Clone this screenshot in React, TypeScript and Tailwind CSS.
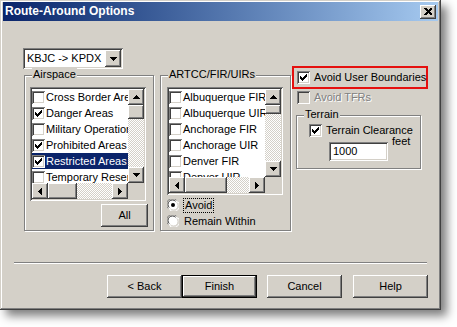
import React from "react"

const raised =
  "shadow-[inset_-1px_-1px_#404040,inset_1px_1px_#ffffff,inset_-2px_-2px_#808080,inset_2px_2px_#d4d0c8]"
const sunken =
  "shadow-[inset_1px_1px_#808080,inset_-1px_-1px_#ffffff,inset_2px_2px_#404040,inset_-2px_-2px_#d4d0c8]"
const etched = "border border-[#808080] shadow-[1px_1px_0_#ffffff,inset_1px_1px_0_#ffffff]"
const dither =
  "bg-[image:repeating-conic-gradient(#ffffff_0_25%,#d4d0c8_0_50%)] bg-[size:2px_2px]"

type Dir = "up" | "down" | "left" | "right"

function Arrow({ dir }: { dir: Dir }) {
  const rows = [0, 1, 2, 3]
  if (dir === "up" || dir === "down") {
    return (
      <svg width="7" height="4" shapeRendering="crispEdges">
        {rows.map((i) => (
          <rect key={i} x={3 - i} y={dir === "up" ? i : 3 - i} width={2 * i + 1} height={1} fill="#000" />
        ))}
      </svg>
    )
  }
  return (
    <svg width="4" height="7" shapeRendering="crispEdges">
      {rows.map((i) => (
        <rect key={i} x={dir === "left" ? i : 3 - i} y={3 - i} width={1} height={2 * i + 1} fill="#000" />
      ))}
    </svg>
  )
}

function CheckMark({ color = "#000" }: { color?: string }) {
  // classic 7x7 windows tick
  const cols = [2, 3, 4, 3, 2, 1, 0]
  return (
    <svg width="7" height="7" shapeRendering="crispEdges">
      {cols.map((y, x) => (
        <rect key={x} x={x} y={y} width={1} height={3} fill={color} />
      ))}
    </svg>
  )
}

function CheckBox({ checked, disabled }: { checked?: boolean; disabled?: boolean }) {
  return (
    <div
      className={`w-[13px] h-[13px] shrink-0 flex items-center justify-center ${sunken} ${
        disabled ? "bg-[#d4d0c8]" : "bg-white"
      }`}
    >
      {checked && <CheckMark />}
    </div>
  )
}

function Radio({ checked }: { checked?: boolean }) {
  return (
    <svg width="12" height="12" className="shrink-0">
      <circle cx="6" cy="6" r="5.5" fill="#fff" />
      <path d="M1.2 9.4 A5.5 5.5 0 0 1 9.4 1.2" stroke="#808080" strokeWidth="1" fill="none" />
      <path d="M2.3 8.6 A4.3 4.3 0 0 1 8.6 2.3" stroke="#404040" strokeWidth="1" fill="none" />
      <path d="M2.6 10.8 A5.5 5.5 0 0 0 10.8 2.6" stroke="#fff" strokeWidth="1" fill="none" />
      <path d="M3.4 9.7 A4.3 4.3 0 0 0 9.7 3.4" stroke="#d4d0c8" strokeWidth="1" fill="none" />
      {checked && <circle cx="6" cy="6" r="2" fill="#000" />}
    </svg>
  )
}

function ScrollButton({ dir }: { dir: Dir }) {
  return (
    <div className={`w-[16px] h-[16px] shrink-0 bg-[#d4d0c8] flex items-center justify-center ${raised}`}>
      <Arrow dir={dir} />
    </div>
  )
}

function VScroll({ thumb }: { thumb: number }) {
  return (
    <div className="w-[16px] h-full flex flex-col">
      <ScrollButton dir="up" />
      <div className={`flex-1 ${dither}`}>
        <div className={`w-[16px] bg-[#d4d0c8] ${raised}`} style={{ height: thumb }} />
      </div>
      <ScrollButton dir="down" />
    </div>
  )
}

function HScroll({ thumb }: { thumb: number }) {
  return (
    <div className="h-[16px] flex">
      <ScrollButton dir="left" />
      <div className={`flex-1 ${dither}`}>
        <div className={`h-[16px] bg-[#d4d0c8] ${raised}`} style={{ width: thumb }} />
      </div>
      <ScrollButton dir="right" />
      <div className="w-[16px] h-[16px] bg-[#d4d0c8]" />
    </div>
  )
}

interface Item {
  label: string
  checked?: boolean
  selected?: boolean
}

function CheckList({ items, height, vThumb, hThumb }: { items: Item[]; height: number; vThumb: number; hThumb: number }) {
  return (
    <div className={`w-[116px] p-[2px] bg-white flex flex-col ${sunken}`} style={{ height: height + 20 }}>
      <div className="flex" style={{ height }}>
        <div className="w-[96px] overflow-hidden">
          {items.map((it) => (
            <div
              key={it.label}
              className={`h-[16px] flex items-center gap-[1px] whitespace-nowrap ${
                it.selected ? "bg-[#0a246a] text-white" : ""
              }`}
            >
              <CheckBox checked={it.checked} />
              <span>{it.label}</span>
            </div>
          ))}
        </div>
        <VScroll thumb={vThumb} />
      </div>
      <HScroll thumb={hThumb} />
    </div>
  )
}

function Button({ label, isDefault, className = "" }: { label: string; isDefault?: boolean; className?: string }) {
  return (
    <div
      className={`h-[23px] flex items-center justify-center bg-[#d4d0c8] ${
        isDefault
          ? "border border-black shadow-[inset_-1px_-1px_#404040,inset_1px_1px_#ffffff,inset_-2px_-2px_#808080]"
          : raised
      } ${className}`}
    >
      {label}
    </div>
  )
}

function GroupLabel({ text }: { text: string }) {
  return (
    <span className="absolute -top-[8px] left-[7px] px-[1px] bg-[#d4d0c8] leading-[13px]">{text}</span>
  )
}

const airspace: Item[] = [
  { label: "Cross Border Areas" },
  { label: "Danger Areas", checked: true },
  { label: "Military Operations Areas" },
  { label: "Prohibited Areas", checked: true },
  { label: "Restricted Areas", checked: true, selected: true },
  { label: "Temporary Reserved Airspace" },
]

const artcc: Item[] = [
  { label: "Albuquerque FIR" },
  { label: "Albuquerque UIR" },
  { label: "Anchorage FIR" },
  { label: "Anchorage UIR" },
  { label: "Denver FIR" },
  { label: "Denver UIR" },
]

export default function App() {
  return (
    <div
      className="w-[457px] h-[327px] bg-white text-[11px] text-black leading-[13px]"
      style={{ fontFamily: '"Liberation Sans", Arial, sans-serif' }}
    >
      <div className="w-[441px] h-[310px] bg-[#d4d0c8] pt-[2px] px-[3px] flex flex-col shadow-[inset_-1px_-1px_#404040,inset_1px_1px_#d4d0c8,inset_-2px_-2px_#808080,inset_2px_2px_#ffffff,6px_6px_9px_rgba(0,0,0,0.5)]">
        {/* Title bar */}
        <div className="h-[19px] flex items-center pl-[2px] pr-[2px] bg-gradient-to-r from-[#0a246a] to-[#a6caf0]">
          <span className="flex-1 text-white font-bold text-[12px]">Route-Around Options</span>
          <div className={`w-[16px] h-[14px] bg-[#d4d0c8] flex items-center justify-center ${raised}`}>
            <svg width="8" height="7" shapeRendering="crispEdges">
              <path d="M0 0h2l2 2l2-2h2v1l-2.5 2.5l2.5 2.5v1h-2l-2-2l-2 2h-2v-1l2.5-2.5l-2.5-2.5z" fill="#000" />
            </svg>
          </div>
        </div>

        {/* Main area */}
        <div className="flex pl-[20px] mt-[27px]">
          <div className="w-[268px] flex flex-col">
            {/* Route combo */}
            <div className={`w-[100px] h-[21px] p-[2px] bg-white flex items-center ${sunken}`}>
              <span className="flex-1 pl-[2px]">KBJC -&gt; KPDX</span>
              <div className={`w-[16px] h-[17px] bg-[#d4d0c8] flex items-center justify-center ${raised}`}>
                <Arrow dir="down" />
              </div>
            </div>

            <div className="flex gap-[6px] ml-[1px] mt-[6px]">
              {/* Airspace group */}
              <div className={`relative w-[130px] h-[156px] pt-[11px] pl-[5px] flex flex-col ${etched}`}>
                <GroupLabel text="Airspace" />
                <CheckList items={airspace} height={94} vThumb={14} hThumb={29} />
                <Button label="All" className="w-[47px] h-[21px] self-end mr-[5px] mt-[3px]" />
              </div>

              {/* ARTCC group */}
              <div className={`relative w-[131px] h-[156px] pt-[11px] pl-[6px] flex flex-col ${etched}`}>
                <GroupLabel text="ARTCC/FIR/UIRs" />
                <CheckList items={artcc} height={88} vThumb={9} hThumb={42} />
                <div className="mt-[2px] h-[16px] flex items-center gap-[4px]">
                  <Radio checked />
                  <span className="border border-dotted border-black px-[1px] leading-[13px]">Avoid</span>
                </div>
                <div className="h-[16px] flex items-center gap-[5px]">
                  <Radio />
                  <span>Remain Within</span>
                </div>
              </div>
            </div>
          </div>

          {/* Right column */}
          <div className="ml-[1px] flex flex-col">
            <div className="mt-[18px] w-[136px] h-[23px] border-2 border-[#e5100f] pl-[3px] flex items-center gap-[4px] whitespace-nowrap">
              <CheckBox checked />
              <span>Avoid User Boundaries</span>
            </div>
            <div className="h-[16px] ml-[5px] flex items-center gap-[4px] whitespace-nowrap">
              <CheckBox disabled />
              <span className="text-[#808080] [text-shadow:1px_1px_0_#ffffff]">Avoid TFRs</span>
            </div>

            <div className={`relative ml-[4px] mt-[10px] w-[125px] h-[54px] pt-[8px] pl-[12px] ${etched}`}>
              <GroupLabel text="Terrain" />
              <div className="flex items-center gap-[4px] whitespace-nowrap">
                <CheckBox checked />
                <span>Terrain Clearance</span>
              </div>
              <div className="flex items-start ml-[20px] mt-[5px]">
                <div className={`w-[59px] h-[19px] bg-white pl-[4px] flex items-center ${sunken}`}>1000</div>
                <span className="ml-[4px] -mt-[7px]">feet</span>
              </div>
            </div>
          </div>
        </div>

        {/* Separator */}
        <div className="mx-[11px] mt-[31px] h-[2px] border-t border-[#808080] border-b border-b-white" />

        {/* Buttons */}
        <div className="flex justify-end pr-[10px] mt-[11px]">
          <Button label="< Back" className="w-[75px]" />
          <Button label="Finish" isDefault className="w-[75px]" />
          <Button label="Cancel" className="w-[75px] ml-[10px]" />
          <Button label="Help" className="w-[75px] ml-[11px]" />
        </div>
      </div>
    </div>
  )
}
